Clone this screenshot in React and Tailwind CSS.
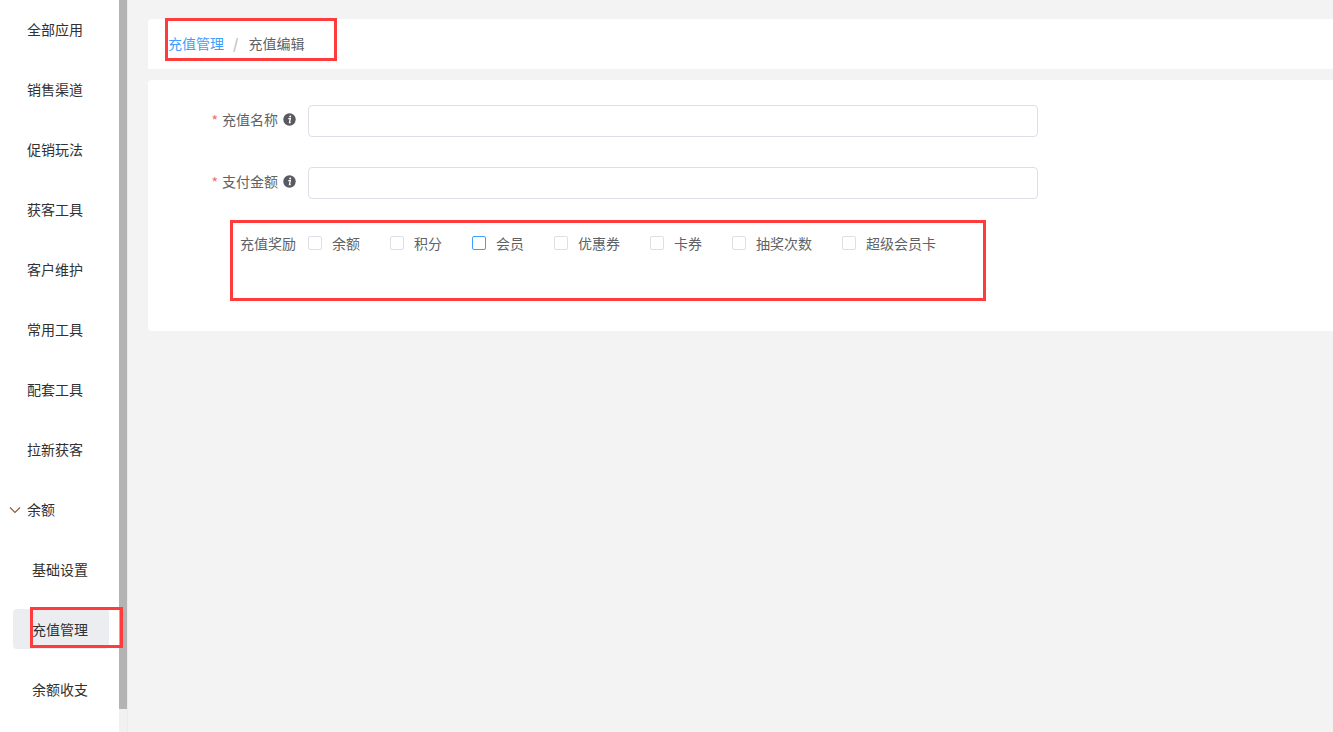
import React from 'react';

const font = { fontFamily: '"Noto Sans CJK SC", "Liberation Sans", sans-serif' };

const menus = ['全部应用', '销售渠道', '促销玩法', '获客工具', '客户维护', '常用工具', '配套工具', '拉新获客'];
const subMenus = ['基础设置', '充值管理', '余额收支'];
const rewards = [
  { label: '余额', width: 'w-[82px]' },
  { label: '积分', width: 'w-[82px]' },
  { label: '会员', width: 'w-[82px]', active: true },
  { label: '优惠券', width: 'w-[96px]' },
  { label: '卡券', width: 'w-[82px]' },
  { label: '抽奖次数', width: 'w-[110px]' },
  { label: '超级会员卡', width: 'w-[124px]' },
];

const InfoIcon = () => (
  <svg width="13" height="13" viewBox="0 0 13 13" className="shrink-0">
    <circle cx="6.5" cy="6.5" r="6.2" fill="#595961" />
    <circle cx="7.2" cy="3.4" r="1" fill="#fff" />
    <path d="M5.3 5.7h2L6.5 9.6h1.2" fill="none" stroke="#fff" strokeWidth="1.3" />
  </svg>
);

const Field = ({ label }) => (
  <div className="flex items-center h-8 mb-[30px]">
    <div className="w-[160px] flex items-center justify-end text-sm text-[#606266]">
      <span className="text-[#f56c6c] mr-1 pb-[2px]">*</span>
      <span className="pb-[4px]">{label}</span>
      <span className="ml-[5px] mr-3 pb-[3px]"><InfoIcon /></span>
    </div>
    <input className="w-[730px] h-8 bg-white border border-[#dcdfe6] rounded" />
  </div>
);

export default function App() {
  return (
    <div className="relative flex h-[732px] overflow-hidden bg-[#f3f3f3]" style={font}>
      {/* 左侧菜单 */}
      <aside className="w-[119px] h-full shrink-0 bg-white text-sm text-[#303133]">
        {menus.map((item) => (
          <div key={item} className="h-[60px] flex items-center pl-[27px] pb-[2px]">{item}</div>
        ))}
        <div className="h-[60px] flex items-center pl-[27px] pb-[2px] relative">
          <svg width="12" height="12" viewBox="0 0 12 12" className="absolute left-[9px] top-[24px]">
            <path d="M1 3.5l5 5 5-5" fill="none" stroke="#8a5a3c" strokeWidth="1.2" />
          </svg>
          余额
        </div>
        {subMenus.map((item) => (
          <div key={item} className="h-[60px] flex items-center pl-[13px] pb-[2px]">
            <div className={`h-10 w-[96px] flex items-center pl-[19px] rounded ${item === '充值管理' ? 'bg-[#ebedf0]' : ''}`}>
              {item}
            </div>
          </div>
        ))}
      </aside>

      {/* 滚动条 */}
      <div className="w-2 h-full shrink-0 bg-[#f1f1f1]">
        <div className="h-[709px] bg-[#b3b3b3]" />
      </div>
      <div className="w-px h-full shrink-0 bg-[#ebebeb]" />

      {/* 内容 */}
      <main className="flex-1 pt-[19px] pl-5 min-w-0">
        <div className="h-[50px] bg-white rounded-tl flex items-center pl-5 pb-[3px] text-sm">
          <span className="text-[#409eff]">充值管理</span>
          <span className="text-[#c0c4cc] ml-[9px] mr-[10px] font-bold">/</span>
          <span className="text-[#606266]">充值编辑</span>
        </div>
        <div className="mt-[11px] h-[251px] bg-white rounded-l pt-[25px]">
          <Field label="充值名称" />
          <Field label="支付金额" />
          <div className="flex items-center text-sm text-[#606266] pl-[92px] mt-9 h-4">
            <span className="w-[68px]">充值奖励</span>
            {rewards.map((r) => (
              <label key={r.label} className={`flex items-center ${r.width}`}>
                <span className={`w-[14px] h-[14px] rounded-[2px] bg-white border ${r.active ? 'border-[#409eff]' : 'border-[#dcdfe6]'}`} />
                <span className="ml-[10px]">{r.label}</span>
              </label>
            ))}
          </div>
        </div>
      </main>

      {/* 标注红框 */}
      <div className="absolute left-[165px] top-[18px] w-[172px] h-[43px] border-[3px] border-[#ff3b3b]" />
      <div className="absolute left-[230px] top-[220px] w-[756px] h-[81px] border-[3px] border-[#ff3b3b]" />
      <div className="absolute left-[30px] top-[607px] w-[93px] h-[41px] border-[3px] border-[#ff3b3b]" />
    </div>
  );
}
